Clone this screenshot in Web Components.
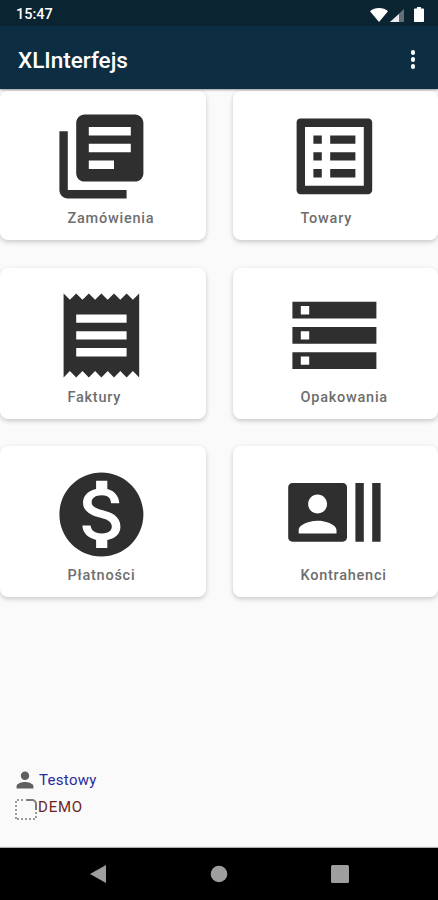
<!DOCTYPE html>
<html lang="pl">
<head>
<meta charset="utf-8">
<title>XLInterfejs</title>
<style>
    html, body { margin: 0; height: 100%; }
    body {
        width: 438px;
        height: 900px;
        overflow: hidden;
        display: flex;
        flex-direction: column;
        background: #fafafa;
        font-family: Roboto, "Liberation Sans", sans-serif;
    }
</style>
</head>
<body>
<status-bar time="15:47"></status-bar>
<app-bar title="XLInterfejs"></app-bar>
<tile-grid>
    <menu-tile label="Zamówienia" style="--top:15px;--h:149px">
        <svg viewBox="0 0 24 24"><path d="M4 6H2v14c0 1.1.9 2 2 2h14v-2H4V6zm16-4H8c-1.1 0-2 .9-2 2v12c0 1.1.9 2 2 2h12c1.1 0 2-.9 2-2V4c0-1.1-.9-2-2-2zm-1 9H9V9h10v2zm-4 4H9v-2h6v2zm4-8H9V5h10v2z"/></svg>
    </menu-tile>
    <menu-tile label="Towary" style="--top:15px;--h:149px">
        <svg viewBox="0 0 24 24"><path d="M19 5v14H5V5h14m1.1-2H3.9c-.5 0-.9.4-.9.9v16.2c0 .4.4.9.9.9h16.2c.4 0 .9-.5.9-.9V3.9c0-.5-.5-.9-.9-.9zM11 7h6v2h-6V7zm0 4h6v2h-6v-2zm0 4h6v2h-6zM7 7h2v2H7zm0 4h2v2H7zm0 4h2v2H7z"/></svg>
    </menu-tile>
    <menu-tile label="Faktury" style="--top:17px;--h:151px">
        <svg viewBox="0 0 24 24"><path d="M18 17H6v-2h12v2zm0-4H6v-2h12v2zm0-4H6V7h12v2zM3 22l1.5-1.5L6 22l1.5-1.5L9 22l1.5-1.5L12 22l1.5-1.5L15 22l1.5-1.5L18 22l1.5-1.5L21 22V2l-1.5 1.5L18 2l-1.5 1.5L15 2l-1.5 1.5L12 2l-1.5 1.5L9 2 7.5 3.5 6 2 4.5 3.5 3 2v20z"/></svg>
    </menu-tile>
    <menu-tile label="Opakowania" style="--top:17px;--h:151px">
        <svg viewBox="0 0 24 24"><path d="M2 20h20v-4H2v4zm2-3h2v2H4v-2zM2 4v4h20V4H2zm4 3H4V5h2v2zm-4 7h20v-4H2v4zm2-3h2v2H4v-2z"/></svg>
    </menu-tile>
    <menu-tile label="Płatności" style="--top:18px;--h:151px">
        <svg viewBox="0 0 24 24"><path d="M12 2C6.48 2 2 6.48 2 12s4.48 10 10 10 10-4.48 10-10S17.52 2 12 2zm1.41 16.09V20h-2.67v-1.93c-1.71-.36-3.16-1.46-3.27-3.4h1.96c.1 1.05.82 1.87 2.65 1.87 1.96 0 2.4-.98 2.4-1.59 0-.83-.44-1.61-2.67-2.14-2.48-.6-4.18-1.62-4.18-3.67 0-1.72 1.39-2.84 3.11-3.21V4h2.67v1.95c1.86.45 2.79 1.86 2.85 3.39H14.3c-.05-1.11-.64-1.87-2.22-1.87-1.5 0-2.4.68-2.4 1.64 0 .84.65 1.39 2.67 1.91s4.18 1.39 4.18 3.91c-.01 1.83-1.38 2.83-3.12 3.16z"/></svg>
    </menu-tile>
    <menu-tile label="Kontrahenci" style="--top:16px;--h:151px">
        <svg viewBox="0 0 24 24"><path d="M21 5v14h2V5h-2zm-4 14h2V5h-2v14zM14 5H2c-.55 0-1 .45-1 1v12c0 .55.45 1 1 1h12c.55 0 1-.45 1-1V6c0-.55-.45-1-1-1zM8 7.75c1.24 0 2.25 1.01 2.25 2.25S9.24 12.25 8 12.25 5.75 11.24 5.75 10 6.76 7.75 8 7.75zM12.5 17h-9v-.75c0-1.5 3-2.25 4.5-2.25s4.5.75 4.5 2.25V17z"/></svg>
    </menu-tile>
</tile-grid>
<user-info user="Testowy" mode="DEMO"></user-info>
<nav-bar></nav-bar>

<script>
class StatusBar extends HTMLElement {
    constructor() {
        super();
        this.attachShadow({mode: 'open'});
        this.shadowRoot.innerHTML = `
        <style>
            :host {
                display: flex;
                align-items: center;
                justify-content: space-between;
                flex: 0 0 26px;
                padding: 3px 14px 0 16px;
                box-sizing: border-box;
                background: #0b2431;
                color: #fff;
                font: 500 14.5px Roboto, "Liberation Sans", sans-serif;
            }
            #icons { display: flex; align-items: center; gap: 2px; }
            svg { display: block; fill: #fff; }
        </style>
        <span>${this.getAttribute('time')}</span>
        <div id="icons">
            <svg width="18" height="14" viewBox="0 0 18 14"><path d="M0 3.2C2.4 1.2 5.5 0 9 0s6.600 1.200 9 3.200L9 14z"/></svg>
            <svg width="14" height="14" viewBox="0 0 14 14"><path d="M14 1v13H0z" fill-opacity=".35"/><path d="M9 6v8H0l9-8z" fill="#e8ecee"/></svg>
            <svg width="10" height="15" viewBox="0 0 10 15" style="margin-left:8px"><path d="M3 0h4v1.500h2c.6 0 1 .4 1 1V14c0 .6-.4 1-1 1H1c-.6 0-1-.4-1-1V2.500c0-.6.4-1 1-1h2z"/></svg>
        </div>
        `;
    }
}

class AppBar extends HTMLElement {
    constructor() {
        super();
        this.attachShadow({mode: 'open'});
        this.shadowRoot.innerHTML = `
        <style>
            :host {
                display: flex;
                align-items: center;
                justify-content: space-between;
                flex: 0 0 63px;
                padding: 4px 23px 0 18px;
                box-sizing: border-box;
                background: #0d2e42;
                color: #fff;
                box-shadow: 0 1px 2px rgba(0,0,0,0.4);
                position: relative;
            }
            h1 { margin: 0; font: 500 22.5px Roboto, "Liberation Sans", sans-serif; }
            #more { display: flex; flex-direction: column; gap: 2.500px; }
            #more i { display: block; width: 4.500px; height: 4.500px; border-radius: 50%; background: #fff; }
        </style>
        <h1>${this.getAttribute('title')}</h1>
        <div id="more"><i></i><i></i><i></i></div>
        `;
    }
}

class TileGrid extends HTMLElement {
    constructor() {
        super();
        this.attachShadow({mode: 'open'});
        this.shadowRoot.innerHTML = `
        <style>
            :host {
                display: grid;
                grid-template-columns: 206px 205px;
                column-gap: 27px;
                row-gap: 27.5px;
                padding-top: 2px;
            }
        </style>
        <slot></slot>
        `;
    }
}

class MenuTile extends HTMLElement {
    constructor() {
        super();
        this.attachShadow({mode: 'open'});
        this.shadowRoot.innerHTML = `
        <style>
            :host {
                display: flex;
                flex-direction: column;
                justify-content: space-between;
                height: var(--h, 150px);
                box-sizing: border-box;
                padding: var(--top, 15px) 0 12px 0;
                background: #fff;
                border-radius: 8px;
                box-shadow: 0 2px 5px rgba(0,0,0,0.2);
            }
            #icon { margin-left: 50.5px; width: 100.8px; height: 100.8px; }
            ::slotted(svg) { display: block; width: 100.8px; height: 100.8px; fill: #2f2f2f; }
            #label {
                margin-left: 67.5px;
                font: 500 14.5px/18px Roboto, "Liberation Sans", sans-serif;
                letter-spacing: 0.75px;
                color: #6e6e6e;
            }
        </style>
        <div id="icon"><slot></slot></div>
        <div id="label">${this.getAttribute('label')}</div>
        `;
    }
}

class UserInfo extends HTMLElement {
    constructor() {
        super();
        this.attachShadow({mode: 'open'});
        this.shadowRoot.innerHTML = `
        <style>
            :host {
                display: flex;
                flex-direction: column;
                margin-top: auto;
                padding: 0 0 30px 15px;
                font: 400 15px/18px Roboto, "Liberation Sans", sans-serif;
                letter-spacing: 0.3px;
            }
            .row { display: flex; align-items: center; }
            svg { display: block; flex: none; }
            #user { color: #2b2b9c; }
            #mode { color: #6d1f22; letter-spacing: 0.8px; }
        </style>
        <div class="row" style="margin-bottom:6px">
            <svg width="20" height="20" viewBox="2.500 2.500 19 19" style="margin-right:4px"><path fill="#5f5f5f" d="M12 12c2.210 0 4-1.790 4-4s-1.790-4-4-4-4 1.790-4 4 1.790 4 4 4zm0 2c-2.670 0-8 1.340-8 4v2h16v-2c0-2.660-5.330-4-8-4z"/></svg>
            <span id="user">${this.getAttribute('user')}</span>
        </div>
        <div class="row">
            <svg width="22" height="22" viewBox="0 0 22 22" style="margin:2px 1px -2px 0"><path d="M1 21V2h8" fill="none" stroke="#9c9c9c" stroke-width="2" stroke-dasharray="2 2"/><path d="M2 21h19V13" fill="none" stroke="#9c9c9c" stroke-width="2" stroke-dasharray="2 2"/><path d="M11 2h6c2.200 0 4 1.800 4 4v6" fill="none" stroke="#7d7d7d" stroke-width="2"/></svg>
            <span id="mode">${this.getAttribute('mode')}</span>
        </div>
        `;
    }
}

class NavBar extends HTMLElement {
    constructor() {
        super();
        this.attachShadow({mode: 'open'});
        this.shadowRoot.innerHTML = `
        <style>
            :host {
                display: flex;
                flex: 0 0 52px;
                justify-content: center;
                align-items: flex-start;
                padding-top: 17px;
                box-sizing: border-box;
                gap: 92px;
                background: #000;
                box-shadow: 0 -1px 1px rgba(0,0,0,0.3);
            }
            svg { display: block; fill: #9e9e9e; }
        </style>
        <svg width="30" height="18" viewBox="0 0 30 18"><path d="M24 0v18L8 9z"/></svg>
        <svg width="30" height="18" viewBox="0 0 30 18"><circle cx="15" cy="9" r="8.300"/></svg>
        <svg width="30" height="18" viewBox="0 0 30 18"><rect x="5" y="0" width="18" height="18" rx="1.500"/></svg>
        `;
    }
}

customElements.define('status-bar', StatusBar);
customElements.define('app-bar', AppBar);
customElements.define('tile-grid', TileGrid);
customElements.define('menu-tile', MenuTile);
customElements.define('user-info', UserInfo);
customElements.define('nav-bar', NavBar);
</script>
</body>
</html>
